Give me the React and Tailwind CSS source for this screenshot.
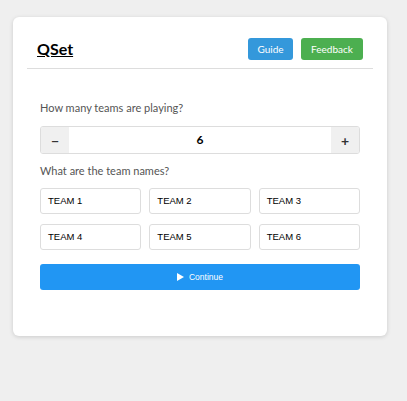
import React from "react";

const ub = { fontFamily: "Lato, 'Noto Sans', sans-serif" };
const ar = { fontFamily: "'Liberation Sans', Arial, sans-serif" };

export default function App() {
  const teams = ["TEAM 1", "TEAM 2", "TEAM 3", "TEAM 4", "TEAM 5", "TEAM 6"];
  return (
    <div className="min-h-[401px] w-[407px] bg-[#efefef] pt-[17px]" style={ub}>
      <div className="ml-[13px] w-[374px] h-[319px] rounded-[6px] bg-white shadow-[0_1px_4px_rgba(0,0,0,0.15)] px-[14px] pt-[21px]">
        <div className="flex items-center justify-between px-[10px] pb-[8px] border-b border-[#dddddd]">
          <span className="text-[16px] font-bold underline text-black leading-[22px]">QSet</span>
          <div className="flex gap-[8px]">
            <button className="h-[22px] w-[45px] rounded-[3px] bg-[#3498db] text-white text-[10px]">Guide</button>
            <button className="h-[22px] w-[62px] rounded-[3px] bg-[#4caf50] text-white text-[10px]">Feedback</button>
          </div>
        </div>
        <div className="px-[13px] pt-[30px]">
          <div className="text-[11px] text-[#555555] leading-[18px]">How many teams are playing?</div>
          <div className="mt-[9px] flex h-[28px] rounded-[3px] border border-[#dddddd] overflow-hidden">
            <div className="w-[28px] bg-[#f0f0f0] flex items-center justify-center text-[14px] text-[#333] font-bold">−</div>
            <div className="flex-1 flex items-center justify-center text-[12px] text-black font-bold">6</div>
            <div className="w-[28px] bg-[#f0f0f0] flex items-center justify-center text-[14px] text-[#333] font-bold">+</div>
          </div>
          <div className="mt-[8px] text-[11px] text-[#555555] leading-[18px]">What are the team names?</div>
          <div className="mt-[8px] grid grid-cols-3 gap-x-[8px] gap-y-[10px]">
            {teams.map((t) => (
              <div key={t} className="h-[26px] rounded-[3px] border border-[#dddddd] flex items-center px-[7px] text-[9.5px] text-black" style={ar}>
                {t}
              </div>
            ))}
          </div>
          <button className="mt-[14px] w-full h-[26px] rounded-[3px] bg-[#2196f3] text-white text-[8.5px] flex items-center justify-center gap-[5px]" style={ar}>
            <svg width="7" height="8" viewBox="0 0 7 8"><path d="M0 0 L7 4 L0 8 Z" fill="white" /></svg>
            Continue
          </button>
        </div>
      </div>
    </div>
  );
}
